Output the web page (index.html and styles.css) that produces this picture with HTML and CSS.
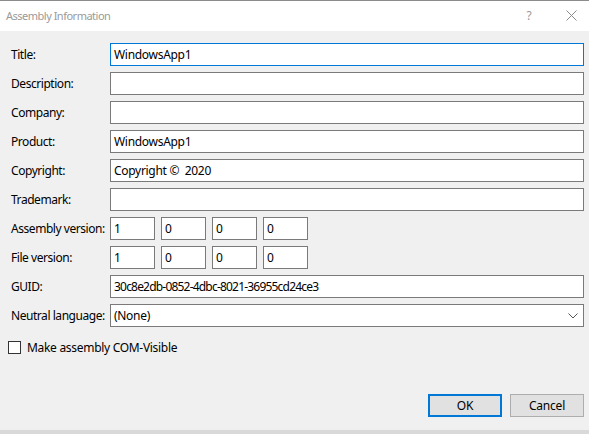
FILE: index.html
```html
<!DOCTYPE html>
<html lang="en">
<head>
    <meta charset="UTF-8">
    <title>Assembly Information</title>
    <link rel="stylesheet" href="styles.css">
</head>
<body>

    <div class="dialog">
        <!-- Title bar -->
        <div class="titlebar">
            <span class="caption">Assembly Information</span>
            <span class="help">?</span>
            <span class="close">
                <svg width="11" height="11" viewBox="0 0 11 11"><path d="M0.5 0.5 L10.5 10.5 M10.5 0.5 L0.5 10.5" stroke="#8a8a8a" stroke-width="1" fill="none"/></svg>
            </span>
        </div>

        <div class="content">
            <div class="form">
                <label>Title:</label>
                <div class="field focused">WindowsApp1</div>

                <label>Description:</label>
                <div class="field"></div>

                <label>Company:</label>
                <div class="field"></div>

                <label>Product:</label>
                <div class="field">WindowsApp1</div>

                <label>Copyright:</label>
                <div class="field">Copyright ©&nbsp; 2020</div>

                <label>Trademark:</label>
                <div class="field"></div>

                <label>Assembly version:</label>
                <div class="version">
                    <div class="field">1</div>
                    <div class="field">0</div>
                    <div class="field">0</div>
                    <div class="field">0</div>
                </div>

                <label>File version:</label>
                <div class="version">
                    <div class="field">1</div>
                    <div class="field">0</div>
                    <div class="field">0</div>
                    <div class="field">0</div>
                </div>

                <label>GUID:</label>
                <div class="field guid">30c8e2db-0852-4dbc-8021-36955cd24ce3</div>

                <label>Neutral language:</label>
                <div class="field select">
                    <span>(None)</span>
                    <svg width="10" height="6" viewBox="0 0 10 6"><path d="M0.5 0.5 L5 5 L9.5 0.5" stroke="#555" stroke-width="1" fill="none"/></svg>
                </div>
            </div>

            <div class="check">
                <span class="box"></span>
                <span>Make assembly COM-Visible</span>
            </div>

            <div class="buttons">
                <button class="default">OK</button>
                <button>Cancel</button>
            </div>
        </div>
    </div>

</body>
</html>
```

FILE: styles.css
```css
html {
    background-color: #d9d9d9;
}
body {
    margin: 0;
    font-family: 'Noto Sans', sans-serif;
    font-size: 12px;
    letter-spacing: -0.3px;
    color: #000;
}
.dialog {
    width: 589px;
    height: 430px;
    border-top: 1px solid #8c8c8c;
    background-color: #f0f0f0;
    box-sizing: border-box;
    display: flex;
    flex-direction: column;
}
.titlebar {
    height: 30px;
    padding-bottom: 1px;
    box-sizing: border-box;
    background-color: #fff;
    display: flex;
    align-items: center;
    color: #9a9a9a;
    flex-shrink: 0;
}
.caption {
    padding-left: 6px;
    flex: 1;
    font-size: 11px;
    letter-spacing: -0.5px;
}
.help {
    width: 44px;
    text-align: center;
    font-size: 12px;
    margin-right: 2px;
}
.close {
    width: 36px;
    display: flex;
    justify-content: center;
}
.content {
    flex: 1;
    display: flex;
    flex-direction: column;
    padding: 12px 5px 13px 11px;
}
.form {
    display: grid;
    grid-template-columns: 99px 474px;
    grid-auto-rows: 23px;
    row-gap: 6px;
}
.form label {
    display: flex;
    align-items: center;
    white-space: nowrap;
    letter-spacing: -0.45px;
}
.field {
    height: 23px;
    box-sizing: border-box;
    border: 1px solid #7a7a7a;
    background-color: #fff;
    padding: 0 3px;
    display: flex;
    align-items: center;
    white-space: nowrap;
}
.field.focused {
    border-color: #0078d7;
}
.field.guid {
    letter-spacing: -0.8px;
}
.version {
    display: flex;
    gap: 6px;
}
.version .field {
    width: 45px;
}
.select {
    justify-content: space-between;
    padding-right: 5px;
}
.check {
    display: flex;
    align-items: center;
    gap: 6px;
    margin: 12px 0 0 -3px;
}
.box {
    width: 13px;
    height: 13px;
    box-sizing: border-box;
    border: 1px solid #333;
    background-color: #fff;
}
.buttons {
    margin-top: auto;
    display: flex;
    justify-content: flex-end;
    gap: 8px;
}
button {
    width: 74px;
    height: 23px;
    box-sizing: border-box;
    font-family: inherit;
    font-size: 12px;
    letter-spacing: -0.2px;
    background-color: #e1e1e1;
    border: 1px solid #adadad;
    padding: 0;
    color: #000;
}
button.default {
    border: 2px solid #0078d7;
}
```
